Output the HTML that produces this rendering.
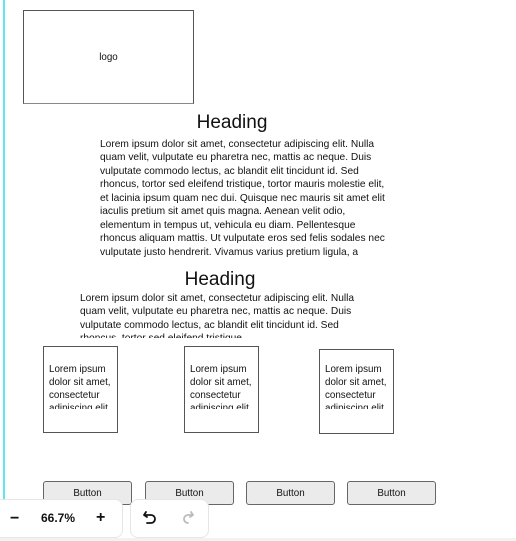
<!DOCTYPE html>
<html><head><style>
*{margin:0;padding:0;box-sizing:border-box}
body{width:516px;height:541px;overflow:hidden;background:#fff;font-family:"Liberation Sans",Arial,sans-serif;position:relative;color:#111}
.a{position:absolute}
.p{font-size:10.2px;line-height:13.45px}
.card{border:1px solid #555;background:#fff;width:75px;height:87px}
.card div{position:absolute;left:5px;top:16px;width:68px;height:46px;overflow:hidden;font-size:9.8px;line-height:13px}
.btn{top:481px;width:89px;height:24px;background:#ebebeb;border:1px solid #666;border-radius:3px;font-size:9.8px;text-align:center;line-height:23px}
.tb{background:#fff;border:1px solid #e6e6e6;border-radius:8px;top:499px;height:39px}
</style></head><body>
<div class="a" style="left:3px;top:0;width:2px;height:541px;background:#5ee8ee"></div>
<div class="a" style="left:0;top:538px;width:516px;height:3px;background:#f2f2f2"></div>
<div class="a" style="left:23px;top:10px;width:171px;height:94px;border:1px solid #555;border-bottom-color:#888;font-size:9.8px;text-align:center;line-height:94px">logo</div>
<div class="a" style="left:132px;top:112px;width:200px;text-align:center;font-size:19px">Heading</div>
<div class="a p" style="left:100px;top:138px;width:291px">Lorem ipsum dolor sit amet, consectetur adipiscing elit. Nulla quam velit, vulputate eu pharetra nec, mattis ac neque. Duis vulputate commodo lectus, ac blandit elit tincidunt id. Sed rhoncus, tortor sed eleifend tristique, tortor mauris molestie elit, et lacinia ipsum quam nec dui. Quisque nec mauris sit amet elit iaculis pretium sit amet quis magna. Aenean velit odio, elementum in tempus ut, vehicula eu diam. Pellentesque rhoncus aliquam mattis. Ut vulputate eros sed felis sodales nec vulputate justo hendrerit. Vivamus varius pretium ligula, a</div>
<div class="a" style="left:120px;top:269px;width:200px;text-align:center;font-size:19px">Heading</div>
<div class="a p" style="left:80px;top:292px;width:286px;height:46px;overflow:hidden">Lorem ipsum dolor sit amet, consectetur adipiscing elit. Nulla quam velit, vulputate eu pharetra nec, mattis ac neque. Duis vulputate commodo lectus, ac blandit elit tincidunt id. Sed rhoncus, tortor sed eleifend tristique</div>
<div class="a card" style="left:43px;top:346px"><div>Lorem ipsum dolor sit amet, consectetur adipiscing elit</div></div>
<div class="a card" style="left:184px;top:346px"><div>Lorem ipsum dolor sit amet, consectetur adipiscing elit</div></div>
<div class="a card" style="left:319px;top:349px;height:85px"><div style="top:13px">Lorem ipsum dolor sit amet, consectetur adipiscing elit</div></div>
<div class="a btn" style="left:43px">Button</div>
<div class="a btn" style="left:145px">Button</div>
<div class="a btn" style="left:246px">Button</div>
<div class="a btn" style="left:347px">Button</div>
<div class="a tb" style="left:-8px;width:131px"></div>
<div class="a" style="left:10px;top:510px;font-size:16px;font-weight:bold">−</div>
<div class="a" style="left:41px;top:511px;font-size:12px;font-weight:bold">66.7%</div>
<div class="a" style="left:96px;top:509px;font-size:16px;font-weight:bold">+</div>
<div class="a tb" style="left:130px;width:79px"></div>
<svg class="a" style="left:141px;top:509px" width="18" height="18" viewBox="0 0 18 18" fill="none" stroke="#111" stroke-width="1.8" stroke-linecap="round" stroke-linejoin="round"><path d="M5 3 L3 6 L6 8"/><path d="M3.5 6 H10 A4 4 0 0 1 10 14 H6"/></svg>
<svg class="a" style="left:179px;top:509px" width="18" height="18" viewBox="0 0 18 18" fill="none" stroke="#bbb" stroke-width="1.8" stroke-linecap="round" stroke-linejoin="round"><path d="M12 3 L14 6 L11 8"/><path d="M13.5 6 H9 A4 4 0 0 0 9 14"/></svg>
</body></html>
